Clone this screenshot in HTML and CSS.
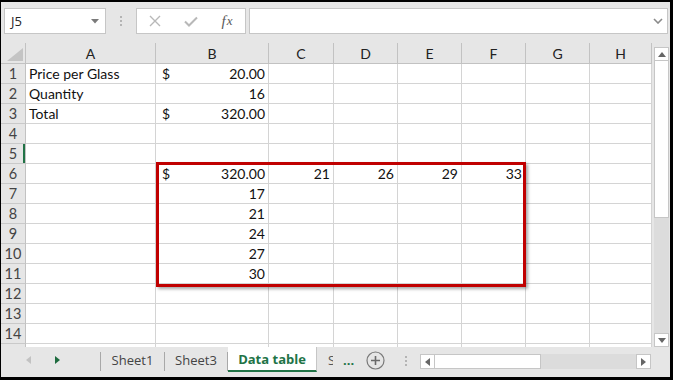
FILE: index.html
```html
<!DOCTYPE html>
<html lang="en">
<head>
    <meta charset="UTF-8">
    <title>Data table</title>
    <link rel="stylesheet" href="styles.css">
</head>
<body>
    <div class="app">
        <div class="fbar">
            <div class="namebox">
                <span>J5</span>
                <svg width="8" height="5" viewBox="0 0 8 5"><path d="M0 0h8L4 4.5z" fill="#7a7a7a"/></svg>
            </div>
            <div class="vdots"><i></i><i></i><i></i></div>
            <div class="fbtns">
                <span class="slot"><svg width="12" height="12" viewBox="0 0 12 12"><path d="M1 1l10 10M11 1L1 11" stroke="#b8b8b8" stroke-width="1.4"/></svg></span>
                <span class="slot"><svg width="14" height="11" viewBox="0 0 14 11"><path d="M1 5.5l4 4l8-8" stroke="#b8b8b8" stroke-width="2" fill="none"/></svg></span>
                <span class="slot fx"><i>f</i><i class="x">x</i></span>
            </div>
            <div class="finput">
                <svg width="10" height="6" viewBox="0 0 10 6"><path d="M1 1l4 4l4-4" stroke="#8a8a8a" stroke-width="1.6" fill="none"/></svg>
            </div>
        </div>

        <div class="sheetwrap">
            <div class="sheet">
                <div class="row hdr">
                    <div class="corner"><svg width="16" height="13" viewBox="0 0 16 13"><path d="M16 0V13H0z" fill="#c4c4c4"/></svg></div>
                    <div>A</div><div>B</div><div>C</div><div>D</div><div>E</div><div>F</div><div>G</div><div>H</div>
                </div>
                <div class="row">
                    <div class="rh">1</div><div class="c">Price per Glass</div><div class="c acc"><span>$</span><span>20.00</span></div>
                    <div class="c"></div><div class="c"></div><div class="c"></div><div class="c"></div><div class="c"></div><div class="c"></div>
                </div>
                <div class="row">
                    <div class="rh">2</div><div class="c">Quantity</div><div class="c n">16</div>
                    <div class="c"></div><div class="c"></div><div class="c"></div><div class="c"></div><div class="c"></div><div class="c"></div>
                </div>
                <div class="row">
                    <div class="rh">3</div><div class="c">Total</div><div class="c acc"><span>$</span><span>320.00</span></div>
                    <div class="c"></div><div class="c"></div><div class="c"></div><div class="c"></div><div class="c"></div><div class="c"></div>
                </div>
                <div class="row">
                    <div class="rh">4</div><div class="c"></div><div class="c"></div>
                    <div class="c"></div><div class="c"></div><div class="c"></div><div class="c"></div><div class="c"></div><div class="c"></div>
                </div>
                <div class="row">
                    <div class="rh sel">5</div><div class="c"></div><div class="c"></div>
                    <div class="c"></div><div class="c"></div><div class="c"></div><div class="c"></div><div class="c"></div><div class="c"></div>
                </div>
                <div class="row">
                    <div class="rh">6</div><div class="c"></div><div class="c acc"><span>$</span><span>320.00</span></div>
                    <div class="c n">21</div><div class="c n">26</div><div class="c n">29</div><div class="c n">33</div><div class="c"></div><div class="c"></div>
                </div>
                <div class="row">
                    <div class="rh">7</div><div class="c"></div><div class="c n">17</div>
                    <div class="c"></div><div class="c"></div><div class="c"></div><div class="c"></div><div class="c"></div><div class="c"></div>
                </div>
                <div class="row">
                    <div class="rh">8</div><div class="c"></div><div class="c n">21</div>
                    <div class="c"></div><div class="c"></div><div class="c"></div><div class="c"></div><div class="c"></div><div class="c"></div>
                </div>
                <div class="row">
                    <div class="rh">9</div><div class="c"></div><div class="c n">24</div>
                    <div class="c"></div><div class="c"></div><div class="c"></div><div class="c"></div><div class="c"></div><div class="c"></div>
                </div>
                <div class="row">
                    <div class="rh">10</div><div class="c"></div><div class="c n">27</div>
                    <div class="c"></div><div class="c"></div><div class="c"></div><div class="c"></div><div class="c"></div><div class="c"></div>
                </div>
                <div class="row">
                    <div class="rh">11</div><div class="c"></div><div class="c n">30</div>
                    <div class="c"></div><div class="c"></div><div class="c"></div><div class="c"></div><div class="c"></div><div class="c"></div>
                </div>
                <div class="row">
                    <div class="rh">12</div><div class="c"></div><div class="c"></div>
                    <div class="c"></div><div class="c"></div><div class="c"></div><div class="c"></div><div class="c"></div><div class="c"></div>
                </div>
                <div class="row">
                    <div class="rh">13</div><div class="c"></div><div class="c"></div>
                    <div class="c"></div><div class="c"></div><div class="c"></div><div class="c"></div><div class="c"></div><div class="c"></div>
                </div>
                <div class="row">
                    <div class="rh">14</div><div class="c"></div><div class="c"></div>
                    <div class="c"></div><div class="c"></div><div class="c"></div><div class="c"></div><div class="c"></div><div class="c"></div>
                </div>
                <div class="row">
                    <div class="rh"></div><div class="c"></div><div class="c"></div>
                    <div class="c"></div><div class="c"></div><div class="c"></div><div class="c"></div><div class="c"></div><div class="c"></div>
                </div>

                <div class="redbox"></div>
            </div>

            <div class="vscroll">
                <div class="sbtn"><svg width="8" height="5" viewBox="0 0 8 5"><path d="M0 5h8L4 0z" fill="#666"/></svg></div>
                <div class="vthumb"></div>
                <div class="sbtn down"><svg width="8" height="5" viewBox="0 0 8 5"><path d="M0 0h8L4 5z" fill="#666"/></svg></div>
            </div>
        </div>

        <div class="tabbar">
            <div class="navs">
                <svg width="5" height="8" viewBox="0 0 5 8"><path d="M5 0v8L0 4z" fill="#c2c2c2"/></svg>
                <svg width="5" height="8" viewBox="0 0 5 8"><path d="M0 0v8L5 4z" fill="#1e6b3f"/></svg>
            </div>
            <div class="tab first">Sheet1</div>
            <div class="tab">Sheet3</div>
            <div class="tab active">Data table</div>
            <div class="tab cut"><span>S</span></div>
            <div class="more">...</div>
            <div class="add">
                <svg width="19" height="19" viewBox="0 0 19 19"><circle cx="9.5" cy="9.5" r="8.5" stroke="#7a7a7a" stroke-width="1.2" fill="none"/><path d="M9.5 5v9M5 9.5h9" stroke="#6a6a6a" stroke-width="1.6"/></svg>
            </div>
            <div class="hdots"><i></i><i></i><i></i></div>
            <div class="hscroll">
                <div class="hbtn"><svg width="5" height="8" viewBox="0 0 5 8"><path d="M5 0v8L0 4z" fill="#666"/></svg></div>
                <div class="hthumb"></div>
                <div class="htrack"></div>
                <div class="hbtn"><svg width="5" height="8" viewBox="0 0 5 8"><path d="M0 0v8L5 4z" fill="#666"/></svg></div>
            </div>
        </div>
    </div>
</body>
</html>
```

FILE: styles.css
```css
body{
    margin: 0px;
    background: #000;
    font-family: "Lato", "Liberation Sans", sans-serif;
}
.app{
    margin: 2px 0px 0px 1px;
    width: 669px;
    height: 375px;
    background: #e6e6e6;
    display: flex;
    flex-direction: column;
    overflow: hidden;
}

/* formula bar */
.fbar{
    height: 41px;
    flex: none;
    box-sizing: border-box;
    padding: 6px 0px 0px 3px;
    display: flex;
    align-items: flex-start;
}
.namebox{
    width: 102px;
    height: 26px;
    box-sizing: border-box;
    background: #fff;
    border: 1px solid #c6c6c6;
    display: flex;
    align-items: center;
    justify-content: space-between;
    padding: 0px 6px 0px 6px;
    font-family: "Open Sans", sans-serif;
    font-size: 13px;
    color: #262626;
}
.vdots{
    width: 30px;
    height: 26px;
    display: flex;
    flex-direction: column;
    align-items: center;
    justify-content: center;
    gap: 2px;
}
.vdots i, .hdots i{
    display: block;
    width: 2px;
    height: 2px;
    background: #b4b4b4;
}
.fbtns{
    width: 110px;
    height: 26px;
    box-sizing: border-box;
    background: #fff;
    border: 1px solid #c6c6c6;
    display: flex;
    align-items: center;
}
.slot{
    width: 36px;
    display: flex;
    align-items: center;
    justify-content: center;
}
.fx{
    font-family: "Liberation Serif", serif;
    font-style: italic;
    font-size: 15px;
    color: #5a5a5a;
}
.fx i{ font-style: italic; }
.fx .x{ font-size: 13px; margin-left: 1px; }
.finput{
    width: 419px;
    height: 26px;
    margin-left: 3px;
    box-sizing: border-box;
    background: #fff;
    border: 1px solid #c6c6c6;
    display: flex;
    align-items: center;
    justify-content: flex-end;
    padding-right: 4px;
}

/* sheet */
.sheetwrap{
    height: 304px;
    flex: none;
    display: flex;
}
.sheet{
    width: 651px;
    height: 304px;
    position: relative;
    overflow: hidden;
    background: #fff;
}
.row{
    display: grid;
    grid-template-columns: 25px 130px 113px 65px 64px 64px 64px 64px 62px;
    height: 20px;
}
.row > div{
    box-sizing: border-box;
    border-right: 1px solid #d4d4d4;
    border-bottom: 1px solid #d4d4d4;
}
.row.hdr{
    height: 21px;
}
.row.hdr > div{
    background: #e6e6e6;
    border-right-color: #c2c2c2;
    border-bottom-color: #c2c2c2;
    font-size: 14px;
    color: #222;
    display: flex;
    align-items: center;
    justify-content: center;
}
.row.hdr > .corner{
    justify-content: flex-end;
    align-items: flex-end;
    padding: 0px 2px 2px 0px;
}
.rh{
    background: #e6e6e6;
    border-right-color: #c2c2c2 !important;
    border-bottom-color: #c9c9c9 !important;
    font-size: 14.5px;
    line-height: 19px;
    color: #444;
    text-align: center;
}
.rh.sel{
    box-shadow: inset -2px 0px 0px #217346;
}
.c{
    font-size: 14px;
    line-height: 19px;
    color: #111;
    padding: 0px 3px;
    display: flex;
    white-space: nowrap;
}
.c.n{
    justify-content: flex-end;
}
.c.acc{
    justify-content: space-between;
    padding-left: 6px;
}
.redbox{
    position: absolute;
    left: 155px;
    top: 119px;
    width: 370px;
    height: 125px;
    box-sizing: border-box;
    border: 3px solid #c00000;
    box-shadow: 2px 2px 3px rgba(0,0,0,0.35);
}

/* vertical scrollbar */
.vscroll{
    width: 15px;
    margin: 4px 1px 0px 2px;
    background: #dcdcdc;
    display: flex;
    flex-direction: column;
}
.sbtn{
    height: 14px;
    flex: none;
    box-sizing: border-box;
    background: #fff;
    border: 1px solid #c6c6c6;
    display: flex;
    align-items: center;
    justify-content: center;
}
.sbtn.down{
    margin-top: auto;
}
.vthumb{
    height: 157px;
    box-sizing: border-box;
    background: #fff;
    border: 1px solid #c6c6c6;
    border-top: none;
}

/* sheet tabs */
.tabbar{
    height: 30px;
    flex: none;
    display: flex;
    align-items: flex-start;
    font-family: "Open Sans", "Noto Sans", sans-serif;
    font-size: 13px;
    color: #444;
}
.navs{
    width: 99px;
    height: 25px;
    display: flex;
    align-items: center;
    gap: 24px;
    padding-left: 25px;
    box-sizing: border-box;
}
.tab{
    height: 25px;
    box-sizing: border-box;
    display: flex;
    align-items: center;
    justify-content: center;
    border-right: 1px solid #a8a8a8;
    background-clip: padding-box;
}
.tab.first{
    width: 65px;
    border-left: 1px solid #a8a8a8;
}
.tab.first, .tab:nth-child(3){
    border-image: linear-gradient(#e6e6e6 6px, #a8a8a8 6px, #a8a8a8 23px, #e6e6e6 23px) 1;
}
.tab:nth-child(3){
    width: 63px;
}
.tab.active{
    width: 89px;
    background: #fff;
    color: #217346;
    font-weight: bold;
    border-right: 1px solid #c6c6c6;
    border-bottom: 2px solid #217346;
}
.tab.cut{
    width: 17px;
    border: none;
    justify-content: flex-start;
    padding-left: 11px;
    overflow: hidden;
}
.tab.cut span{
    display: block;
    width: 5px;
    overflow: hidden;
    color: #555;
}
.more{
    width: 24px;
    height: 25px;
    display: flex;
    align-items: center;
    padding-left: 9px;
    box-sizing: border-box;
    color: #217346;
    font-weight: bold;
}
.add{
    width: 34px;
    height: 27px;
    display: flex;
    align-items: center;
    justify-content: center;
}
.hdots{
    width: 28px;
    height: 27px;
    display: flex;
    flex-direction: column;
    align-items: center;
    justify-content: center;
    gap: 2px;
}
.hscroll{
    width: 231px;
    height: 15px;
    margin-top: 7px;
    display: flex;
}
.hbtn{
    width: 15px;
    box-sizing: border-box;
    background: #fff;
    border: 1px solid #c6c6c6;
    display: flex;
    align-items: center;
    justify-content: center;
}
.hthumb{
    width: 106px;
    box-sizing: border-box;
    background: #fff;
    border: 1px solid #c6c6c6;
    border-left: none;
}
.htrack{
    flex: 1;
    background: #dcdcdc;
}
```
